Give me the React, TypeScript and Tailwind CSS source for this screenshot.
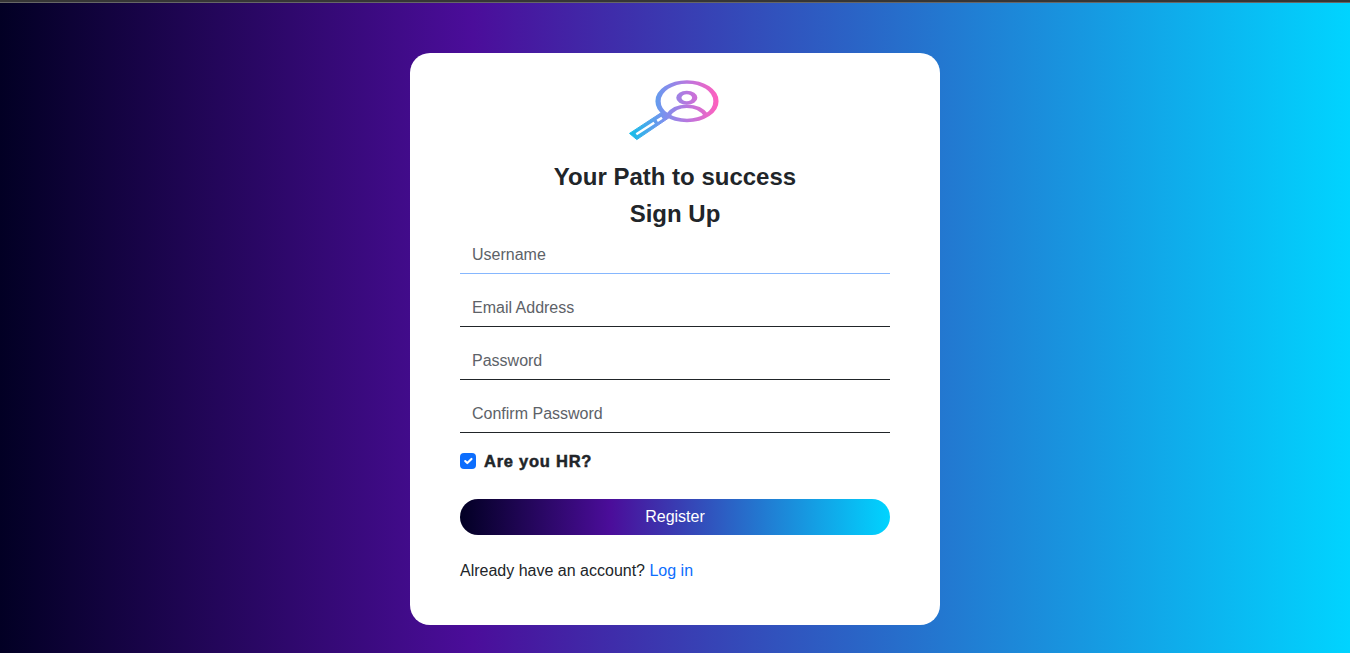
import React from "react";

const gradient =
  "bg-[linear-gradient(90deg,#020024_0%,#4b0d9a_35%,#00d4ff_100%)]";

const fields = [
  { label: "Username", type: "text", border: "border-[#86b7fe]" },
  { label: "Email Address", type: "email", border: "border-[#212529]" },
  { label: "Password", type: "password", border: "border-[#212529]" },
  { label: "Confirm Password", type: "password", border: "border-[#212529]" },
];

function Logo() {
  return (
    <svg width="92" height="62" viewBox="0 0 92 62" fill="none" className="block" aria-hidden="true">
      <defs>
        <linearGradient id="logo" gradientUnits="userSpaceOnUse" x1="3" y1="30" x2="90" y2="30">
          <stop offset="0" stopColor="#18bde8" />
          <stop offset="0.38" stopColor="#7b91ee" />
          <stop offset="0.68" stopColor="#c074dc" />
          <stop offset="1" stopColor="#ff60bd" />
        </linearGradient>
        <linearGradient id="lens" gradientUnits="userSpaceOnUse" x1="2" y1="30" x2="60" y2="30">
          <stop offset="0" stopColor="#18bde8" />
          <stop offset="0.38" stopColor="#7b91ee" />
          <stop offset="0.68" stopColor="#c074dc" />
          <stop offset="1" stopColor="#ff60bd" />
        </linearGradient>
      </defs>
      <path d="M1.5 54.4L34.5 32.8L43 37.4L8.8 60.6Z" fill="url(#logo)" stroke="url(#logo)" strokeLinejoin="round" />
      <path d="M8.3 55.3L26.2 43.7M29.2 41.9L34 38.8" stroke="#fff" strokeWidth="2.5" />
      <g transform="scale(1.5 1)" stroke="url(#lens)" strokeWidth="3.5">
        <circle cx="39.33" cy="22.2" r="19.3" />
        <circle cx="39.2" cy="18.7" r="5.3" />
        <path d="M26.6 36.4C29.4 30.2 33.9 27.2 39.2 27.2S49.4 30.2 52.3 36.4" />
      </g>
    </svg>
  );
}

export default function App() {
  return (
    <div className="flex h-[653px] flex-col overflow-hidden font-['Liberation_Sans',Arial,sans-serif] text-base leading-6 text-[#212529]">
      <div className="h-[3px] shrink-0 border-b border-[#666666] bg-[#363636]" />
      <main className={`flex flex-1 items-start justify-center pt-[50px] ${gradient}`}>
        <form className="flex h-[572px] w-[530px] flex-col rounded-[20px] bg-white px-[50px] pt-[26px]">
          <div className="flex justify-center pr-[2px]">
            <Logo />
          </div>
          <h1 className="mt-[21px] text-center text-2xl leading-[29px] font-bold">
            Your Path to success
          </h1>
          <h2 className="mt-2 text-center text-2xl leading-[29px] font-bold">Sign Up</h2>
          <div className="mt-2 flex flex-col gap-[15px]">
            {fields.map((f) => (
              <input
                key={f.label}
                type={f.type}
                placeholder={f.label}
                aria-label={f.label}
                className={`h-[38px] w-full border-b bg-white px-3 outline-none placeholder:text-[#5d6268] ${f.border}`}
              />
            ))}
          </div>
          <div className="mt-4 flex items-center gap-2">
            <span className="flex size-4 items-center justify-center rounded-[4px] bg-[#0d6efd]">
              <svg viewBox="0 0 20 20" className="size-[14px]" fill="none" stroke="#fff" strokeWidth="3" strokeLinecap="round" strokeLinejoin="round">
                <path d="m6 10 3 3 6-6" />
              </svg>
            </span>
            <span className="text-[16.5px] font-bold tracking-[0.75px] [-webkit-text-stroke:0.5px_#212529]">Are you HR?</span>
          </div>
          <button type="button" className={`mt-[26px] h-9 shrink-0 rounded-full text-white ${gradient}`}>
            Register
          </button>
          <p className="mt-6">
            Already have an account? <a className="text-[#0d6efd]">Log in</a>
          </p>
        </form>
      </main>
    </div>
  );
}
